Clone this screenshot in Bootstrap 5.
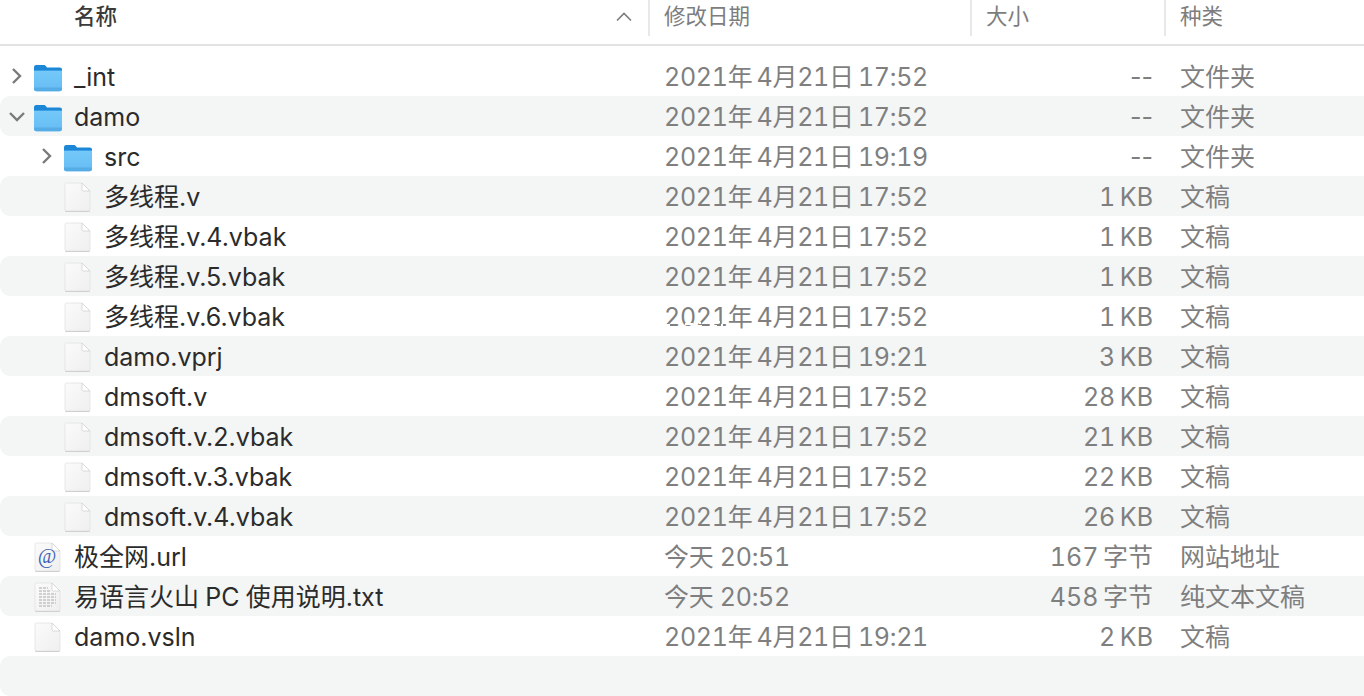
<!DOCTYPE html>
<html lang="zh-CN">
<head>
    <meta charset="UTF-8">
    <meta name="viewport" content="width=device-width, initial-scale=1">
    <title>damo</title>
    <link href="https://cdn.jsdelivr.net/npm/bootstrap@5.3.0/dist/css/bootstrap.min.css" rel="stylesheet">
    <style>
        body {
            font-family: "Inter", "Noto Sans CJK SC", sans-serif;
            background: #fff;
            overflow: hidden;
            height: 696px;
        }

        .finder-cols {
            display: grid;
            grid-template-columns: 648px 322px 194px 1fr;
        }

        .finder-head {
            height: 46px;
            border-bottom: 2px solid #e3e3e3;
            font-size: 21.5px;
            color: #7d7d7d;
        }

        .head-cell {
            height: 36px;
            padding-left: 14px;
            padding-bottom: 3px;
            border-left: 2px solid #e8e8e8;
        }

        .head-name {
            height: 36px;
            padding-left: 74px;
            padding-right: 16px;
            padding-bottom: 3px;
            color: #3a3a3a;
            font-weight: 500;
        }

        .finder-list {
            padding-top: 10px;
        }

        .file-row {
            height: 40px;
            font-size: 25px;
            line-height: 40px;
            color: #7f7f7f;
            white-space: nowrap;
        }

        .file-row:nth-child(even) {
            background: #f4f5f5;
            border-radius: 10px 0 0 10px;
        }

        .name-cell {
            color: #2b2b2b;
            position: relative;
        }

        .name-cell span { padding-top: 1px; }

        .lvl0 { padding-left: 34px; }
        .lvl1 { padding-left: 64px; }

        .twisty {
            position: absolute;
            top: 11px;
            width: 18px;
            height: 18px;
        }

        .lvl0 .twisty { left: 8px; }
        .lvl1 .twisty { left: 38px; }

        .file-icon {
            width: 28px;
            height: 30px;
            margin-right: 12px;
            flex-shrink: 0;
        }

        .date-cell, .size-cell, .kind-cell {
            padding-top: 1px;
        }

        .date-cell, .size-num { font-variant-numeric: tabular-nums; }

        .date-cell { padding-left: 16px; letter-spacing: -.3px; }
        .size-cell { text-align: right; padding-right: 11px; }
        .kind-cell { padding-left: 16px; }

        .speckle {
            position: absolute;
            left: 665px;
            top: 316px;
        }
    </style>
</head>
<body>

<svg width="0" height="0" class="d-block">
    <defs>
        <linearGradient id="folderBody" x1="0" y1="0" x2="0" y2="1">
            <stop offset="0" stop-color="#74c8f9"/>
            <stop offset="1" stop-color="#66bdf4"/>
        </linearGradient>
        <linearGradient id="docBody" x1="0" y1="0" x2="1" y2="1">
            <stop offset="0" stop-color="#fbfbfb"/>
            <stop offset="1" stop-color="#efefef"/>
        </linearGradient>
        <symbol id="ico-folder" viewBox="0 0 28 30">
            <path d="M0 5.500C0 3.800 1 3 2.400 3h7.400c1 0 1.500.4 2.200 1.200L13 5.500h12.600c1.500 0 2.400.9 2.400 2.300V12H0z" fill="#1b87d6"/>
            <path d="M0 8.500h28V27c0 1.300-.9 2.200-2.300 2.200H2.300C.9 29.200 0 28.300 0 27z" fill="url(#folderBody)"/>
            <path d="M0 25.500h28V27c0 1.300-.9 2.200-2.300 2.200H2.300C.9 29.200 0 28.300 0 27z" fill="#56ade6"/>
            <path d="M0 8.200h28v.8H0z" fill="#3b9fe4"/>
        </symbol>
        <symbol id="ico-doc" viewBox="0 0 28 30">
            <path d="M2.500 1.500h16l7.500 7.500v18.500c0 .9-.6 1.500-1.500 1.500h-22c-.9 0-1.500-.6-1.500-1.500V3c0-.9.600-1.500 1.500-1.500z" fill="#c8c8c8" transform="translate(0 1)"/>
            <path d="M2.500 1h15.500l8 8v18.500c0 .9-.6 1.500-1.500 1.500h-22c-.9 0-1.500-.6-1.500-1.500v-25C1 1.600 1.600 1 2.500 1z" fill="url(#docBody)" stroke="#e0e0e0" stroke-width=".7"/>
            <path d="M18 1v6.500c0 1 .5 1.500 1.500 1.500H26z" fill="#fff" stroke="#cccccc" stroke-width=".7"/>
        </symbol>
        <symbol id="ico-text" viewBox="0 0 28 30">
            <use href="#ico-doc"/>
            <path d="M5 6h9M5 9h11M5 12h17M5 15h17M5 18h17M5 21h17M5 24h13" stroke="#c4c4c4" stroke-width="1.400" stroke-dasharray="3 1"/>
        </symbol>
        <symbol id="ico-url" viewBox="0 0 28 30">
            <use href="#ico-doc"/>
            <text x="13" y="21" text-anchor="middle" font-family="Liberation Serif, serif" font-style="italic" font-size="20" fill="#3f5fb5">@</text>
        </symbol>
    </defs>
</svg>

<div class="finder-head finder-cols">
    <div class="head-name d-flex align-items-center justify-content-between">
        <span>名称</span>
        <svg width="16" height="10" viewBox="0 0 16 10"><path d="M1 8.500l7-7 7 7" fill="none" stroke="#7d7d7d" stroke-width="1.600"/></svg>
    </div>
    <div class="head-cell d-flex align-items-center">修改日期</div>
    <div class="head-cell d-flex align-items-center">大小</div>
    <div class="head-cell d-flex align-items-center">种类</div>
</div>

<div class="finder-list" id="file-list"></div>

<svg class="speckle" width="62" height="14" viewBox="0 0 62 14">
    <path d="M0 9h5M7 7h7M15 11h4M20 8h8M30 10h7M39 7h5M45 10h7M53 6h2M56 9h2M2 12h4M10 11h3M24 11h3M34 7h2M42 12h3" stroke="#fff" stroke-width="2"/>
</svg>

<script>
    const D = "2021年\u20094月21日\u2009";
    const files = [
        { name: "_int", date: D + "17:52", size: "--", kind: "文件夹", icon: "folder", lvl: 0, tw: "right" },
        { name: "damo", date: D + "17:52", size: "--", kind: "文件夹", icon: "folder", lvl: 0, tw: "down" },
        { name: "src", date: D + "19:19", size: "--", kind: "文件夹", icon: "folder", lvl: 1, tw: "right" },
        { name: "多线程.v", date: D + "17:52", size: "1\u2009KB", kind: "文稿", icon: "doc", lvl: 1 },
        { name: "多线程.v.4.vbak", date: D + "17:52", size: "1\u2009KB", kind: "文稿", icon: "doc", lvl: 1 },
        { name: "多线程.v.5.vbak", date: D + "17:52", size: "1\u2009KB", kind: "文稿", icon: "doc", lvl: 1 },
        { name: "多线程.v.6.vbak", date: D + "17:52", size: "1\u2009KB", kind: "文稿", icon: "doc", lvl: 1 },
        { name: "damo.vprj", date: D + "19:21", size: "3\u2009KB", kind: "文稿", icon: "doc", lvl: 1 },
        { name: "dmsoft.v", date: D + "17:52", size: "28\u2009KB", kind: "文稿", icon: "doc", lvl: 1 },
        { name: "dmsoft.v.2.vbak", date: D + "17:52", size: "21\u2009KB", kind: "文稿", icon: "doc", lvl: 1 },
        { name: "dmsoft.v.3.vbak", date: D + "17:52", size: "22\u2009KB", kind: "文稿", icon: "doc", lvl: 1 },
        { name: "dmsoft.v.4.vbak", date: D + "17:52", size: "26\u2009KB", kind: "文稿", icon: "doc", lvl: 1 },
        { name: "极全网.url", date: "今天 20:51", size: "167\u2009字节", kind: "网站地址", icon: "url", lvl: 0 },
        { name: "易语言火山\u2005PC\u2005使用说明.txt", date: "今天 20:52", size: "458\u2009字节", kind: "纯文本文稿", icon: "text", lvl: 0 },
        { name: "damo.vsln", date: D + "19:21", size: "2\u2009KB", kind: "文稿", icon: "doc", lvl: 0 }
    ];

    const twisties = {
        right: '<path d="M5 2l7 7-7 7" fill="none" stroke="#7a7a7a" stroke-width="2.400"/>',
        down: '<path d="M2 6l7 7 7-7" fill="none" stroke="#7a7a7a" stroke-width="2.400"/>'
    };

    let list = document.getElementById("file-list");
    files.forEach((f) => {
        let row = document.createElement("div");
        row.className = "file-row finder-cols";
        let tw = f.tw ? `<svg class="twisty" viewBox="0 0 18 18">${twisties[f.tw]}</svg>` : "";
        let sizeClass = f.size === "--" ? "" : "size-num";
        row.innerHTML = `
            <div class="name-cell d-flex align-items-center lvl${f.lvl}">
                ${tw}
                <svg class="file-icon"><use href="#ico-${f.icon}"/></svg>
                <span>${f.name}</span>
            </div>
            <div class="date-cell">${f.date}</div>
            <div class="size-cell ${sizeClass}">${f.size}</div>
            <div class="kind-cell">${f.kind}</div>
        `;
        list.appendChild(row);
    });
    // empty striped row at the bottom of the window
    let last = document.createElement("div");
    last.className = "file-row";
    list.appendChild(last);
</script>

<script src="https://cdn.jsdelivr.net/npm/bootstrap@5.3.0/dist/js/bootstrap.bundle.min.js"></script>
</body>
</html>
